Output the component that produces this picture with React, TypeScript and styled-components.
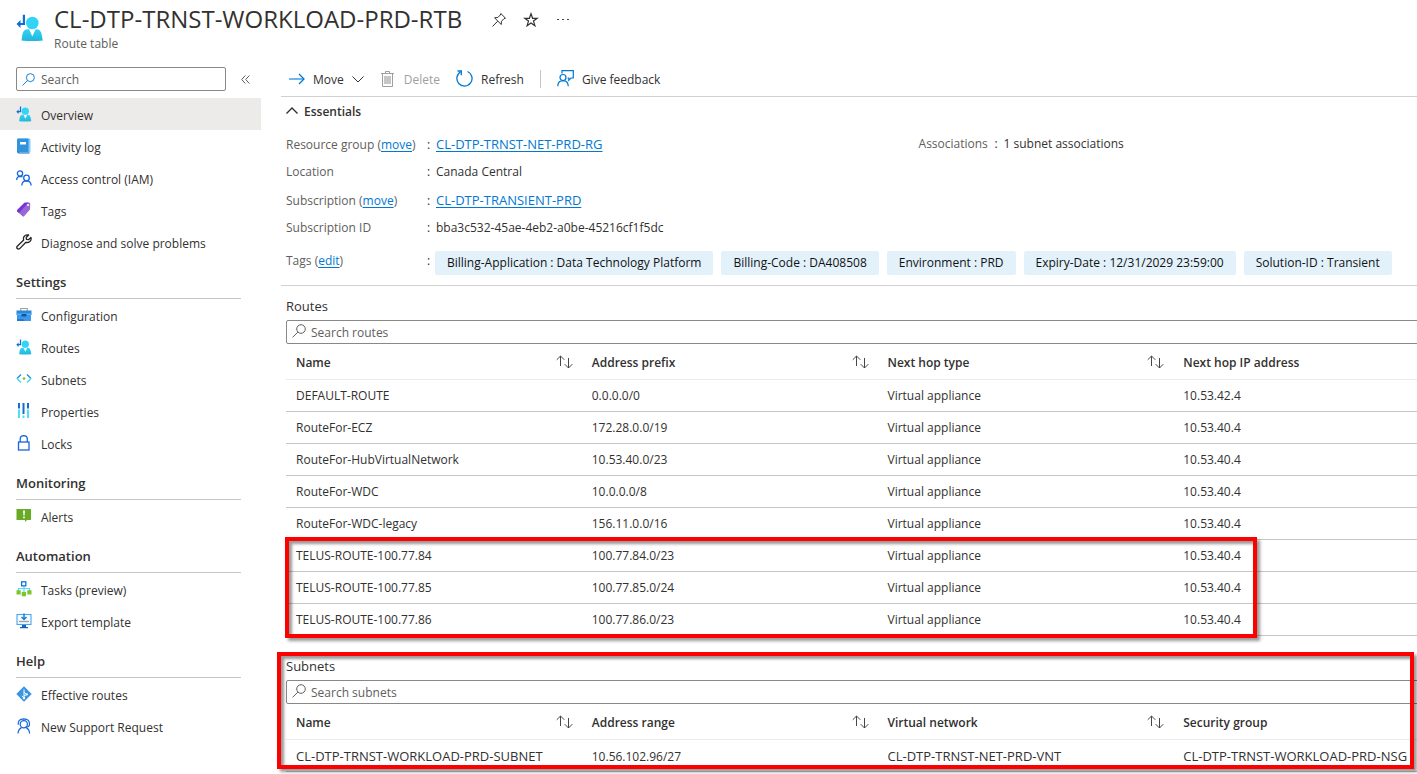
import React from 'react';
import styled, { createGlobalStyle, css } from 'styled-components';

const GlobalStyle = createGlobalStyle`
  * { box-sizing: border-box; }
  body {
    margin: 0;
    background: #fff;
    color: #323130;
    font: 12px/18px 'Segoe UI', 'Open Sans', 'Noto Sans', sans-serif;
    overflow-x: hidden;
  }
  button, input { font: inherit; color: inherit; }
  svg { display: block; flex: none; }
`;

/* ---------- icons ---------- */

const RouteTableIcon = ({ size = 16 }: { size?: number }) => (
  <svg width={size} height={size} viewBox="0 0 28 28" aria-hidden="true">
    <defs>
      <linearGradient id="person" x1="0" y1="0" x2="0" y2="1">
        <stop offset="0" stopColor="#32d4f5" />
        <stop offset="1" stopColor="#22b5dc" />
      </linearGradient>
    </defs>
    <path d="M5.500 26.500 L6.500 20 Q7.300 16 11 15.300 H21 Q24.800 16 25.600 20 L26.800 26.500 Q16 27.500 5.500 26.500Z" fill="url(#person)" />
    <path d="M13 15 L16.300 22.500 L19.800 15Z" fill="#fff" />
    <circle cx="16.300" cy="9" r="6.300" fill="#32d4f5" />
    <path d="M6.800 0.800 H9 V11 H4.500 V14 L0.500 10 L4.500 6 V8.900 H6.800Z" fill="#0f6fd4" />
  </svg>
);

const PinIcon = () => (
  <svg width="16" height="16" viewBox="0 0 16 16" fill="none" stroke="#323130" aria-hidden="true">
    <path d="M9.800 1.500 L14.500 6.200 L13 6.700 L10.500 9.300 L10.200 12.500 L3.600 5.800 L6.800 5.500 L9.300 3Z M6.700 9.200 L1.500 14.500" />
  </svg>
);

const StarIcon = () => (
  <svg width="16" height="16" viewBox="0 0 16 16" fill="none" stroke="#323130" strokeWidth="1.200" aria-hidden="true">
    <path d="M8 1.800 L9.600 6.300 H14.200 L10.500 9.100 L11.900 13.700 L8 10.900 L4.100 13.700 L5.500 9.100 L1.800 6.300 H6.400Z" />
  </svg>
);

const MoreIcon = () => (
  <svg width="16" height="16" viewBox="0 0 16 16" fill="#484644" aria-hidden="true">
    <path d="M2 7 h2 v1 h-2z M7 7 h2 v1 h-2z M12 7 h2 v1 h-2z" />
  </svg>
);

const SearchIcon = ({ color, size = 14 }: { color: string; size?: number }) => (
  <svg width={size} height={size} viewBox="0 0 14 14" fill="none" stroke={color} aria-hidden="true">
    <circle cx="9" cy="5" r="4.300" />
    <path d="M5.900 8.100 L0.500 13.400" />
  </svg>
);

const CollapseIcon = () => (
  <svg width="9" height="9" viewBox="0 0 9 9" fill="none" stroke="#605e5c" aria-hidden="true">
    <path d="M4.300 0.500 L0.700 4.500 L4.300 8.500 M8.300 0.500 L4.700 4.500 L8.300 8.500" />
  </svg>
);

const LogIcon = () => (
  <svg width="16" height="16" viewBox="0 0 16 16" aria-hidden="true">
    <rect x="2" y="0.500" width="12.500" height="14" rx="1" fill="#8fc9f2" />
    <path d="M1 1.500 Q1 0.500 2 0.500 H12.500 V14 H2.500 Q1 14 1 12.500Z" fill="#2f93dd" />
    <path d="M1 12.500 Q1 15.500 3 15.500 H13.500 V14.500 H3Z" fill="#0f6cbd" />
    <rect x="4" y="4" width="6" height="2.500" fill="#fff" />
  </svg>
);

const PeopleIcon = () => (
  <svg width="16" height="16" viewBox="0 0 16 16" fill="none" stroke="#1566dc" strokeWidth="1.300" aria-hidden="true">
    <circle cx="4" cy="3.500" r="2.600" />
    <path d="M0.700 10 Q0.700 6.500 4 6.300 Q5.600 6.300 6.500 7" />
    <circle cx="10.500" cy="8" r="2.800" />
    <path d="M5.800 15.500 Q6 11 10.400 10.900 Q14.800 11 15.200 15.500" />
  </svg>
);

const TagIcon = () => (
  <svg width="16" height="16" viewBox="0 0 16 16" aria-hidden="true">
    <path d="M8.500 0.800 L13 0.500 Q14.300 0.500 14.200 2 L14 7.500 L8 14.300 Q7.300 15 6.600 14.300 L1.200 9.500 Q0.700 8.700 1.200 8Z" fill="#9a67d6" />
    <path d="M8.500 0.800 L12.500 0.500 L3 11 L1.200 9.500 Q0.700 8.700 1.200 8Z" fill="#7437cf" />
    <circle cx="12" cy="3" r="1.100" fill="#fff" />
  </svg>
);

const WrenchIcon = () => (
  <svg width="16" height="16" viewBox="0 0 16 16" fill="none" stroke="#242322" strokeWidth="1.300" strokeLinejoin="round" aria-hidden="true">
    <path d="M12.600 1 Q9.600 0.300 8 2.600 Q7 4.300 7.700 6 L1.300 12.200 Q0.300 13.500 1.200 14.600 Q2.500 15.700 3.700 14.600 L9.900 8.300 Q12 9 13.900 7.500 Q15.700 5.800 14.900 3.400 L12.400 5.700 L10.500 5.400 L10.200 3.500Z" />
  </svg>
);

const ConfigIcon = () => (
  <svg width="16" height="16" viewBox="0 0 16 16" aria-hidden="true">
    <path d="M4.800 4 V1.500 H11.200 V4" fill="none" stroke="#a3a3a3" strokeWidth="1.200" />
    <rect x="0.500" y="3.500" width="15" height="4.500" fill="#2b88d8" />
    <rect x="1" y="7" width="14" height="7" rx="0.500" fill="#3b97ea" />
    <path d="M0.500 6.500 H15.500 V8 H10.500 V9.500 H5.500 V8 H0.500Z" fill="#5fb0f5" />
    <rect x="5.500" y="7" width="5" height="2.500" fill="#0f549c" />
    <path d="M1 12 H7 L9 14 H1Z" fill="#2476d0" />
  </svg>
);

const SubnetIcon = () => (
  <svg width="16" height="16" viewBox="0 0 16 16" fill="none" strokeWidth="1.500" aria-hidden="true">
    <path d="M5 3.500 L1 7.500" stroke="#1f8fe0" />
    <path d="M1 7.500 L5 11.500" stroke="#43d5f5" />
    <path d="M11 3.500 L15 7.500" stroke="#1f8fe0" />
    <path d="M15 7.500 L11 11.500" stroke="#43d5f5" />
    <circle cx="8" cy="7.500" r="1.300" fill="#7cc225" />
  </svg>
);

const PropertiesIcon = () => (
  <svg width="16" height="16" viewBox="0 0 16 16" aria-hidden="true">
    <path d="M2 0 H4 V5.500 H2Z M6.500 0 H8.500 V11 H6.500Z M11 0 H13 V5.500 H11Z" fill="#0c71cf" />
    <path d="M2 6.500 H4 V15 H2Z M6.500 12.500 H8.500 V15 H6.500Z M11 6.500 H13 V15 H11Z" fill="#50dcfa" />
  </svg>
);

const LockIcon = () => (
  <svg width="16" height="16" viewBox="0 0 16 16" fill="none" stroke="#1566dc" strokeWidth="1.300" aria-hidden="true">
    <rect x="2.500" y="7" width="10.500" height="8" />
    <path d="M4.200 7 V4 Q4.300 0.800 7.800 0.700 Q11.200 0.800 11.300 4 V7" />
  </svg>
);

const AlertIcon = () => (
  <svg width="16" height="16" viewBox="0 0 16 16" aria-hidden="true">
    <path d="M0.500 1 H15 V12 H11 L9 14 V12 H0.500Z" fill="#69ab25" />
    <path d="M7 2.500 H9 L8.600 7.500 H7.400Z M7.200 8.500 H8.800 V10.200 H7.200Z" fill="#fff" />
  </svg>
);

const TasksIcon = () => (
  <svg width="16" height="16" viewBox="0 0 16 16" aria-hidden="true">
    <path d="M8 5 V11 M2.500 11 V7.500 H13.500 V11" fill="none" stroke="#50dcfa" strokeWidth="1.200" />
    <rect x="5.600" y="0.800" width="4.200" height="4" fill="#fff" stroke="#0f78d4" strokeWidth="1.300" />
    <path d="M0.500 9.300 H4.700 V13.500 H0.500Z M5.700 11 H10 V15.300 H5.700Z M11.300 9.300 H15.500 V13.500 H11.300Z" fill="#7ac62b" />
  </svg>
);

const ExportIcon = () => (
  <svg width="16" height="16" viewBox="0 0 16 16" aria-hidden="true">
    <rect x="1" y="1.500" width="14" height="10" fill="#f4faff" stroke="#4ba5e8" strokeWidth="1.100" />
    <path d="M8 0.500 V6 M5.500 4 L8 6.500 L10.500 4" fill="none" stroke="#1b7fd6" strokeWidth="1.500" />
    <path d="M3 8.500 H13" stroke="#a0a0a0" strokeWidth="1.300" />
    <path d="M6 12 H10 V14 H12 V15.200 H4 V14 H6Z" fill="#1661b8" />
  </svg>
);

const EffectiveIcon = () => (
  <svg width="16" height="16" viewBox="0 0 16 16" aria-hidden="true">
    <path d="M8 0.300 L15.700 8 L8 15.700 L0.300 8Z" fill="#3a95e0" />
    <path d="M8 3.500 V12 M5.800 9.800 L8 12 M8 6 L10.500 8.500 M8 10 L10.500 8.500" fill="none" stroke="#fff" strokeWidth="1" />
    <circle cx="8" cy="12" r="1.200" fill="#fff" />
    <circle cx="10.800" cy="8.400" r="1.100" fill="#fff" />
  </svg>
);

const SupportIcon = () => (
  <svg width="16" height="16" viewBox="0 0 16 16" fill="none" stroke="#1566dc" strokeWidth="1.200" aria-hidden="true">
    <circle cx="7.800" cy="6.300" r="3.600" />
    <path d="M2.200 6.800 Q1.600 1 7.800 0.800 Q14 1 13.500 7 Q13 9.500 9 9.300" />
    <path d="M2 15.500 Q2.300 11.200 5.500 9.600 M10.200 9.600 Q13.300 11.200 13.600 15.500" />
  </svg>
);

const ArrowIcon = () => (
  <svg width="16" height="16" viewBox="0 0 16 16" fill="none" stroke="#0078d4" aria-hidden="true">
    <path d="M0 8 H15" strokeWidth="2" strokeOpacity="0.550" />
    <path d="M10 3 L15 8 L10 13" strokeWidth="1.300" />
  </svg>
);

const ChevronIcon = ({ up = false }: { up?: boolean }) => (
  <svg width="12" height="8" viewBox="0 0 12 8" fill="none" stroke="#323130" strokeWidth={up ? 1.4 : 1} aria-hidden="true">
    <path d={up ? 'M0.500 6.500 L6 1 L11.500 6.500' : 'M0.500 1.500 L6 7 L11.500 1.500'} />
  </svg>
);

const TrashIcon = () => (
  <svg width="16" height="16" viewBox="0 0 16 16" fill="none" stroke="#a19f9d" aria-hidden="true">
    <path d="M1 2.500 H14 M5.500 2.500 V0.500 H9.500 V2.500 M2.500 2.500 V15.500 H12.500 V2.500" />
    <rect x="4" y="5" width="7" height="8" fill="#c8c6c4" stroke="none" />
  </svg>
);

const RefreshIcon = () => (
  <svg width="17" height="18" viewBox="0 0 17 18" fill="none" stroke="#0078d4" strokeWidth="1.300" aria-hidden="true">
    <path d="M4.800 1.800 A7.600 7.600 0 1 0 11.500 1.500" />
    <path d="M1.500 1 H5.300 V5.200" />
  </svg>
);

const FeedbackIcon = () => (
  <svg width="17" height="17" viewBox="0 0 17 17" fill="none" stroke="#0078d4" strokeWidth="1.200" aria-hidden="true">
    <path d="M5 3.500 V0.700 H16.300 V8 H14 L11.800 10.300 V8 H10.500" />
    <circle cx="6" cy="7.500" r="3" />
    <path d="M0.700 16.300 Q1 10.700 6 10.600 Q11 10.700 11.300 16.300" />
  </svg>
);

const SortIcon = () => (
  <svg width="17" height="14" viewBox="0 0 17 14" fill="none" stroke="#484644" aria-hidden="true">
    <path d="M4.500 11 V1 M0.700 4.800 L4.500 1 L8.300 4.800 M12.500 3 V13 M8.700 9.200 L12.500 13 L16.300 9.200" />
  </svg>
);

/* ---------- layout ---------- */

const Page = styled.div`
  min-height: 100vh;
  overflow: hidden;
`;

const Header = styled.header`
  display: flex;
  gap: 10px;
  height: 59px;
  padding: 14px 16px 0;
`;

const HeaderText = styled.div`
  margin-top: -11px;
`;

const TitleRow = styled.div`
  display: flex;
  align-items: center;
  gap: 16px;
  svg { margin-top: 2px; }
`;

const Title = styled.h1`
  margin: 0 13px 0 0;
  font-size: 24px;
  line-height: 32px;
  font-weight: 500;
  white-space: nowrap;
`;

const Subtitle = styled.div`
  color: #605e5c;
`;

const IconButton = styled.button`
  display: flex;
  padding: 0;
  border: 0;
  background: none;
`;

const Columns = styled.div`
  display: flex;
  align-items: flex-start;
`;

const Sidebar = styled.nav`
  flex: 0 0 261px;
`;

const SidebarSearch = styled.div`
  display: flex;
  align-items: center;
  gap: 15px;
  padding: 8px 11px 7px 16px;
`;

const searchFrame = css`
  display: flex;
  align-items: center;
  height: 24px;
  border: 1px solid #8a8886;
  border-radius: 2px;
`;

const NavSearch = styled.label`
  ${searchFrame}
  flex: 1;
  padding-left: 5px;
  gap: 6px;
`;

const SearchInput = styled.input`
  flex: 1;
  min-width: 0;
  padding: 2px 0 0;
  border: 0;
  outline: 0;
  background: none;
  &::placeholder { color: #605e5c; opacity: 1; }
`;

const NavList = styled.ul`
  list-style: none;
  margin: 0;
  padding: 0;
`;

const NavLink = styled.a<{ $active?: boolean }>`
  display: flex;
  align-items: center;
  gap: 9px;
  height: 32px;
  padding: 4px 16px 0;
  color: #323130;
  text-decoration: none;
  background: ${(p) => (p.$active ? '#edebe9' : 'transparent')};
  svg { margin-bottom: 4px; }
`;

const NavHeading = styled.h2`
  height: 41px;
  margin: 0 20px 0 16px;
  padding-top: 15px;
  border-bottom: 1px solid #c8c6c4;
  font-size: 13px;
  line-height: 18px;
  font-weight: 600;
`;

const Main = styled.main`
  flex: 1;
  min-width: 0;
  margin-left: 20px;
`;

const Toolbar = styled.div`
  display: flex;
  align-items: center;
  height: 38px;
  padding: 4px 8px 0;
  border-bottom: 1px solid #d2d0ce;
  svg { margin-bottom: 2px; }
`;

const ToolButton = styled.button`
  display: flex;
  align-items: center;
  gap: 8px;
  margin-right: 16px;
  padding: 0;
  border: 0;
  background: none;
  &:disabled { color: #a19f9d; }
`;

const Divider = styled.span`
  width: 1px;
  height: 18px;
  margin: 0 16px 2px 0;
  background: #c8c6c4;
`;

const Essentials = styled.section`
  padding: 4px 5px 10px;
  border-bottom: 1px solid #d2d0ce;
`;

const EssentialsToggle = styled.button`
  display: flex;
  align-items: center;
  gap: 6px;
  height: 20px;
  margin-bottom: 8px;
  padding: 2px 0 0;
  border: 0;
  background: none;
  font-weight: 600;
  svg { margin-bottom: 2px; }
`;

const Facts = styled.div`
  display: grid;
  grid-template-columns: 56% 1fr;
  column-gap: 2px;
`;

const FactList = styled.dl`
  margin: 0;
`;

const Fact = styled.div<{ $compact?: boolean; $tall?: boolean }>`
  display: grid;
  grid-template-columns: ${(p) => (p.$compact ? '76px' : '141px')} 9px 1fr;
  align-items: ${(p) => (p.$tall ? 'start' : 'baseline')};
  height: ${(p) => (p.$tall ? '34px' : '28px')};
  padding-top: ${(p) => (p.$tall ? '11px' : '6px')};
  white-space: nowrap;
`;

const FactLabel = styled.dt`
  color: #605e5c;
`;

const FactValue = styled.dd`
  margin: 0;
`;

const Link = styled.a`
  color: #0078d4;
  text-decoration: underline;
  text-underline-offset: 2px;
`;

const ResourceLink = styled(Link)`
  font-size: 13px;
`;

const Tags = styled.div`
  display: flex;
  gap: 8px;
  margin: -1px 0 0 -1px;
`;

const Tag = styled.span`
  height: 24px;
  padding: 3px 12px;
  border-radius: 2px;
  background: #e3f1fb;
  color: #111;
`;

const Section = styled.section`
  position: relative;
  margin-left: 5px;
  padding-top: 11px;
  & + & { padding-top: 21px; }
`;

const SectionTitle = styled.h3`
  margin: 0 0 5px;
  font-size: 13px;
  line-height: 18px;
  font-weight: 400;
`;

const Scrolled = styled.div`
  margin-right: -52px;
`;

const GridSearch = styled.label`
  ${searchFrame}
  padding-left: 5px;
  gap: 5px;
  svg { margin-bottom: 2px; }
`;

const Table = styled.table`
  width: 100%;
  table-layout: fixed;
  border-collapse: separate;
  border-spacing: 0;
`;

const HeadCell = styled.th`
  height: 36px;
  padding: 2px 9px 0 10px;
  border-bottom: 1px solid #edebe9;
  font-weight: 600;
  text-align: left;
`;

const SortButton = styled.button`
  display: flex;
  align-items: center;
  justify-content: space-between;
  width: 100%;
  padding: 0;
  border: 0;
  background: none;
  svg { margin-bottom: 2px; }
`;

const Cell = styled.td<{ $resource?: boolean }>`
  height: 32px;
  padding: 7px 0 0 10px;
  border-bottom: 1px solid #c8c6c4;
  font-size: ${(p) => (p.$resource ? '13px' : '12px')};
  vertical-align: baseline;
  white-space: nowrap;
`;

const Highlight = styled.div<{ $wide?: boolean }>`
  position: absolute;
  pointer-events: none;
  border: 4px solid #fe0000;
  box-shadow: 3px 3px 3px rgba(0, 0, 0, 0.4), inset 3px 3px 3px rgba(0, 0, 0, 0.4);
  ${(p) =>
    p.$wide
      ? css`
          left: -9px;
          right: 3px;
          top: 16px;
          bottom: 3px;
        `
      : css`
          left: -1px;
          right: 160px;
          bottom: -2px;
          height: 101px;
        `}
`;

/* ---------- content ---------- */

type NavEntry = [string, React.ReactNode];

const navGroups: { heading?: string; items: NavEntry[] }[] = [
  {
    items: [
      ['Overview', <RouteTableIcon />],
      ['Activity log', <LogIcon />],
      ['Access control (IAM)', <PeopleIcon />],
      ['Tags', <TagIcon />],
      ['Diagnose and solve problems', <WrenchIcon />],
    ],
  },
  {
    heading: 'Settings',
    items: [
      ['Configuration', <ConfigIcon />],
      ['Routes', <RouteTableIcon />],
      ['Subnets', <SubnetIcon />],
      ['Properties', <PropertiesIcon />],
      ['Locks', <LockIcon />],
    ],
  },
  { heading: 'Monitoring', items: [['Alerts', <AlertIcon />]] },
  {
    heading: 'Automation',
    items: [
      ['Tasks (preview)', <TasksIcon />],
      ['Export template', <ExportIcon />],
    ],
  },
  {
    heading: 'Help',
    items: [
      ['Effective routes', <EffectiveIcon />],
      ['New Support Request', <SupportIcon />],
    ],
  },
];

const tags = [
  'Billing-Application : Data Technology Platform',
  'Billing-Code : DA408508',
  'Environment : PRD',
  'Expiry-Date : 12/31/2029 23:59:00',
  'Solution-ID : Transient',
];

const routes = [
  ['DEFAULT-ROUTE', '0.0.0.0/0', 'Virtual appliance', '10.53.42.4'],
  ['RouteFor-ECZ', '172.28.0.0/19', 'Virtual appliance', '10.53.40.4'],
  ['RouteFor-HubVirtualNetwork', '10.53.40.0/23', 'Virtual appliance', '10.53.40.4'],
  ['RouteFor-WDC', '10.0.0.0/8', 'Virtual appliance', '10.53.40.4'],
  ['RouteFor-WDC-legacy', '156.11.0.0/16', 'Virtual appliance', '10.53.40.4'],
  ['TELUS-ROUTE-100.77.84', '100.77.84.0/23', 'Virtual appliance', '10.53.40.4'],
  ['TELUS-ROUTE-100.77.85', '100.77.85.0/24', 'Virtual appliance', '10.53.40.4'],
  ['TELUS-ROUTE-100.77.86', '100.77.86.0/23', 'Virtual appliance', '10.53.40.4'],
];

const subnets = [
  ['CL-DTP-TRNST-WORKLOAD-PRD-SUBNET', '10.56.102.96/27', 'CL-DTP-TRNST-NET-PRD-VNT', 'CL-DTP-TRNST-WORKLOAD-PRD-NSG'],
];

const DataTable = ({ columns, rows }: { columns: string[]; rows: string[][] }) => (
  <Table>
    <thead>
      <tr>
        {columns.map((c) => (
          <HeadCell key={c} scope="col">
            <SortButton type="button">
              {c}
              <SortIcon />
            </SortButton>
          </HeadCell>
        ))}
      </tr>
    </thead>
    <tbody>
      {rows.map((r) => (
        <tr key={r[0]}>
          {r.map((v, i) => (
            <Cell key={i} $resource={v.startsWith('CL-')}>{v}</Cell>
          ))}
        </tr>
      ))}
    </tbody>
  </Table>
);

export default function App() {
  return (
    <Page>
      <GlobalStyle />
      <Header>
        <RouteTableIcon size={28} />
        <HeaderText>
          <TitleRow>
            <Title>CL-DTP-TRNST-WORKLOAD-PRD-RTB</Title>
            <IconButton type="button" aria-label="Pin to dashboard"><PinIcon /></IconButton>
            <IconButton type="button" aria-label="Add to favorites"><StarIcon /></IconButton>
            <IconButton type="button" aria-label="More"><MoreIcon /></IconButton>
          </TitleRow>
          <Subtitle>Route table</Subtitle>
        </HeaderText>
      </Header>
      <Columns>
        <Sidebar>
          <SidebarSearch>
            <NavSearch>
              <SearchIcon color="#0078d4" size={13} />
              <SearchInput type="text" placeholder="Search" aria-label="Search menu" />
            </NavSearch>
            <IconButton type="button" aria-label="Collapse menu"><CollapseIcon /></IconButton>
          </SidebarSearch>
          {navGroups.map((g, gi) => (
            <React.Fragment key={gi}>
              {g.heading && <NavHeading>{g.heading}</NavHeading>}
              <NavList>
                {g.items.map(([label, icon]) => (
                  <li key={label}>
                    <NavLink href="#" $active={label === 'Overview'}>
                      {icon}
                      {label}
                    </NavLink>
                  </li>
                ))}
              </NavList>
            </React.Fragment>
          ))}
        </Sidebar>
        <Main>
          <Toolbar>
            <ToolButton type="button"><ArrowIcon />Move<ChevronIcon /></ToolButton>
            <ToolButton type="button" disabled><TrashIcon />Delete</ToolButton>
            <ToolButton type="button"><RefreshIcon />Refresh</ToolButton>
            <Divider />
            <ToolButton type="button"><FeedbackIcon />Give feedback</ToolButton>
          </Toolbar>
          <Essentials>
            <EssentialsToggle type="button" aria-expanded="true"><ChevronIcon up />Essentials</EssentialsToggle>
            <Facts>
              <FactList>
                <Fact>
                  <FactLabel>Resource group (<Link href="#">move</Link>)</FactLabel>:
                  <FactValue><ResourceLink href="#">CL-DTP-TRNST-NET-PRD-RG</ResourceLink></FactValue>
                </Fact>
                <Fact>
                  <FactLabel>Location</FactLabel>:
                  <FactValue>Canada Central</FactValue>
                </Fact>
                <Fact>
                  <FactLabel>Subscription (<Link href="#">move</Link>)</FactLabel>:
                  <FactValue><ResourceLink href="#">CL-DTP-TRANSIENT-PRD</ResourceLink></FactValue>
                </Fact>
                <Fact>
                  <FactLabel>Subscription ID</FactLabel>:
                  <FactValue>bba3c532-45ae-4eb2-a0be-45216cf1f5dc</FactValue>
                </Fact>
                <Fact $tall>
                  <FactLabel>Tags (<Link href="#">edit</Link>)</FactLabel>:
                  <FactValue>
                    <Tags>{tags.map((t) => <Tag key={t}>{t}</Tag>)}</Tags>
                  </FactValue>
                </Fact>
              </FactList>
              <FactList>
                <Fact $compact>
                  <FactLabel>Associations</FactLabel>:
                  <FactValue>1 subnet associations</FactValue>
                </Fact>
              </FactList>
            </Facts>
          </Essentials>
          <Section>
            <SectionTitle>Routes</SectionTitle>
            <Scrolled>
              <GridSearch>
                <SearchIcon color="#605e5c" />
                <SearchInput type="text" placeholder="Search routes" aria-label="Search routes" />
              </GridSearch>
              <DataTable columns={['Name', 'Address prefix', 'Next hop type', 'Next hop IP address']} rows={routes} />
            </Scrolled>
            <Highlight />
          </Section>
          <Section>
            <SectionTitle>Subnets</SectionTitle>
            <Scrolled>
              <GridSearch>
                <SearchIcon color="#605e5c" />
                <SearchInput type="text" placeholder="Search subnets" aria-label="Search subnets" />
              </GridSearch>
              <DataTable columns={['Name', 'Address range', 'Virtual network', 'Security group']} rows={subnets} />
            </Scrolled>
            <Highlight $wide />
          </Section>
        </Main>
      </Columns>
    </Page>
  );
}
